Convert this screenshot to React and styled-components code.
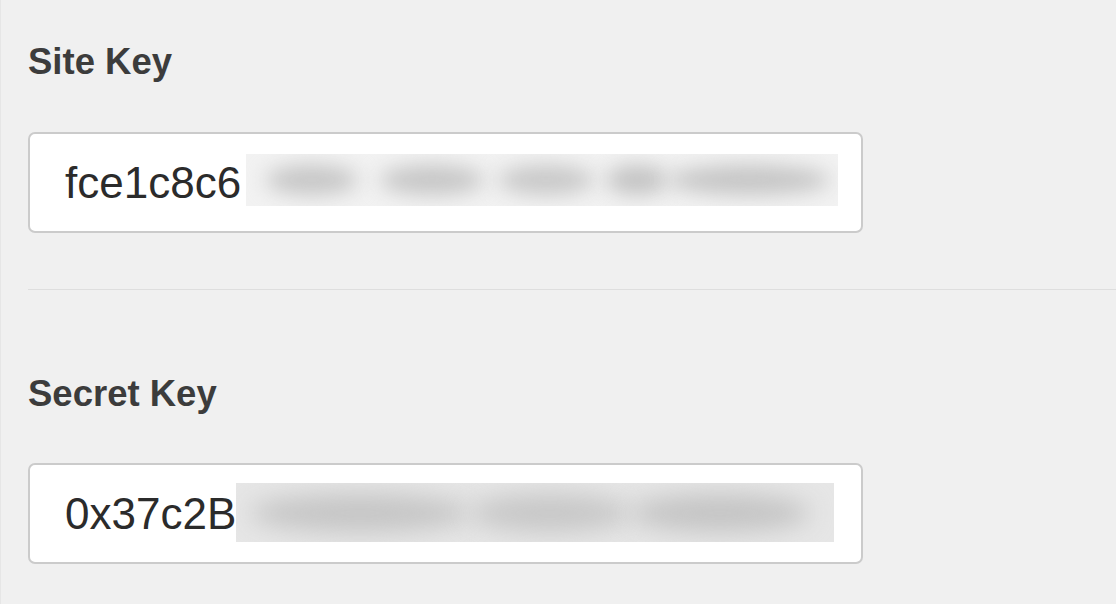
import React from 'react';
import styled, { createGlobalStyle } from 'styled-components';

const GlobalStyle = createGlobalStyle`
  html, body {
    margin: 0;
    padding: 0;
    background: #f0f0f0;
  }
  body {
    font-family: "Liberation Sans", Arial, Helvetica, sans-serif;
  }
`;

const Page = styled.div`
  width: 1116px;
  height: 604px;
  overflow: hidden;
  background: #f0f0f0;
  border-left: 1px solid #e6e6e6;
  box-sizing: border-box;
`;

const Section = styled.section`
  padding: ${(p) => p.$top}px 0 ${(p) => p.$bottom}px 27px;
`;

const Label = styled.div`
  font-size: 36.5px;
  line-height: 43px;
  font-weight: 700;
  color: #3c3c3c;
`;

const Field = styled.div`
  margin-top: ${(p) => p.$gap}px;
  width: 835px;
  height: 101px;
  box-sizing: border-box;
  border: 2px solid #cbcbcb;
  border-radius: 7px;
  background: #ffffff;
  display: flex;
  align-items: center;
  padding-left: 35px;
`;

const Value = styled.span`
  font-size: 44px;
  line-height: 51px;
  color: #2b2b2b;
  white-space: nowrap;
`;

// blurred-out part of the key
const Redacted = styled.div`
  margin-left: ${(p) => p.$gapLeft}px;
  margin-top: ${(p) => p.$shift}px;
  width: ${(p) => p.$w}px;
  height: ${(p) => p.$h}px;
  background: ${(p) => p.$bg};
  overflow: hidden;
  display: flex;
  align-items: center;
  padding-left: ${(p) => p.$pad}px;
  box-sizing: border-box;
`;

const Blob = styled.span`
  flex: none;
  width: ${(p) => p.$w}px;
  height: ${(p) => p.$h || 30}px;
  margin-left: ${(p) => p.$gap || 0}px;
  border-radius: 50%;
  background: ${(p) => p.$tone || '#c6c6c6'};
  filter: blur(${(p) => p.$blur || 10}px);
`;

const Divider = styled.hr`
  margin: 0 0 0 27px;
  border: 0;
  height: 1px;
  background: #dedede;
`;

export default function App() {
  return (
    <>
      <GlobalStyle />
      <Page>
        <Section $top={40} $bottom={56}>
          <Label>Site Key</Label>
          <Field $gap={49}>
            <Value>fce1c8c6</Value>
            <Redacted $gapLeft={5} $shift={-6} $w={592} $h={52} $bg="#f2f2f2" $pad={20}>
              <Blob $w={92} />
              <Blob $w={104} $gap={22} />
              <Blob $w={96} $gap={14} $tone="#c8c8c8" />
              <Blob $w={62} $gap={12} $tone="#c3c3c3" />
              <Blob $w={162} $gap={0} $tone="#c5c5c5" />
            </Redacted>
          </Field>
        </Section>
        <Divider />
        <Section $top={82} $bottom={0}>
          <Label>Secret Key</Label>
          <Field $gap={48}>
            <Value>0x37c2B</Value>
            <Redacted $gapLeft={0} $shift={-2} $w={598} $h={59} $bg="#e6e6e6" $pad={14}>
              <Blob $w={220} $h={38} $tone="#c5c5c5" $blur={12} />
              <Blob $w={160} $h={38} $gap={0} $tone="#c7c7c7" $blur={12} />
              <Blob $w={180} $h={38} $gap={0} $tone="#c4c4c4" $blur={12} />
            </Redacted>
          </Field>
        </Section>
      </Page>
    </>
  );
}
